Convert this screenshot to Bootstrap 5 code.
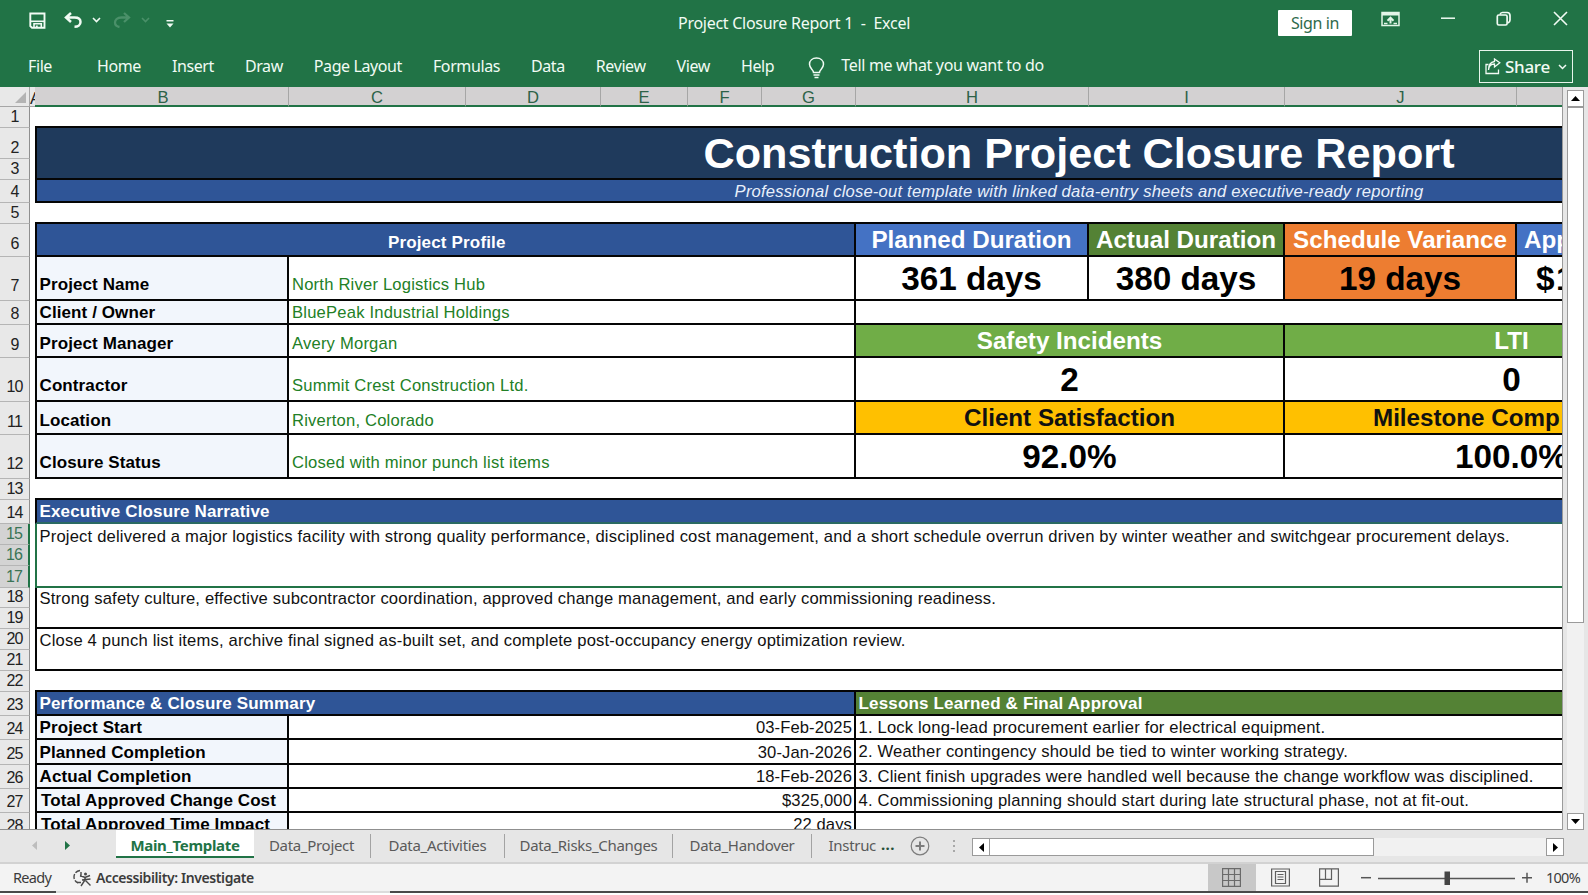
<!DOCTYPE html>
<html lang="en">
<head>
    <meta charset="utf-8">
    <title>Project Closure Report 1 - Excel</title>
    <link rel="stylesheet" href="https://cdn.jsdelivr.net/npm/bootstrap@5.3.0/dist/css/bootstrap.min.css">
    <style>
        body { font-family: "Noto Sans", "Open Sans", sans-serif; height: 895px; overflow: hidden; background: #fff; }
        svg { display: block; flex: none; }

        /* title bar + ribbon */
        .app-top { background: #217346; color: #f1fbf4; height: 87px; }
        .title-bar { height: 46px; }
        .title-side { width: 560px; }
        .doc-title { font-size: 16px; letter-spacing: -.27px; line-height: 22px; white-space: pre; }
        .quick-access { padding-left: 29px; padding-top: 12px; }
        .redo-icon { margin-left: 12px; }
        .customize-icon { margin: 8px 0 0 16px; }
        .win-buttons { padding-right: 20px; }
        .sign-in { width: 74px; height: 26px; margin-top: 10px; background: #fff; color: #2e6a4b; border-radius: 1px; font-size: 16px; line-height: 26px; letter-spacing: -.4px; }
        .ribbon-icon { margin: 11px 0 0 29px; }
        .win-icon { margin: 11px 0 0 41px; }
        .ribbon { height: 41px; padding-left: 28px; }
        .ribbon .nav { padding-top: 8px; }
        .ribbon .nav-link { color: inherit; padding: 0; margin-right: 31px; font-size: 16px; line-height: 24px; letter-spacing: -.4px; white-space: nowrap; }
        .ribbon .nav-link.file-tab { margin-right: 45px; }
        .tell-me { font-size: 16px; letter-spacing: -.32px; line-height: 22px; padding-top: 8px; }
        .bulb-icon { margin: 3px 16px 0 3px; }
        .share-btn { width: 94px; height: 33px; margin: 4px 15px 0 auto; border: 1.5px solid #e8f5ec; font-size: 17px; font-weight: 500; letter-spacing: -.3px; padding-left: 5px; }

        /* worksheet */
        .work-area { height: 743px; background: #e6e6e6; }
        .sheet-view { width: 1563px; overflow: hidden; background: #fff; border-bottom: 1px solid #8f8f8f; }
        .sheet { table-layout: fixed; width: 2123px; border-collapse: separate; border-spacing: 0; font: 16.6px/19px "Liberation Sans", Arial, sans-serif; color: #111; }
        .w-num { width: 30px; } .w-a { width: 5px; } .w-b { width: 254px; } .w-c { width: 177px; } .w-d { width: 135px; } .w-e { width: 87px; }
        .w-f { width: 74px; } .w-g { width: 94px; } .w-h { width: 233px; } .w-i { width: 196px; } .w-j { width: 232px; } .w-k { width: 223px; } .w-l { width: 383px; }
        .sheet td, .sheet th { padding: 0; white-space: nowrap; overflow: hidden; vertical-align: bottom; }
        .sheet thead th { height: 20px; background: #d3d1d2; color: #2d6248; font-weight: 400; text-align: center; line-height: 15px; padding-top: 3px; border-right: 1px solid #a6a6a6; border-bottom: 2px solid #217346; }
        .sheet thead th.corner { background: #e8e8e8; border-bottom: 1px solid #a6a6a6; }
        .sheet thead th.col-a { background: #e8e8e8; color: #222; border-right: 0; border-bottom: 1px solid #a6a6a6; text-align: left; }
        .sheet thead th.col-b { padding-left: 3px; }
        .corner svg { margin: 0 3px 3px auto; }
        .sheet tbody th { background: #e8e8e8; color: #222; font-weight: 400; font-size: 16px; line-height: 18px; letter-spacing: -.8px; text-align: center; border-right: 1px solid #8f8f8f; border-bottom: 1px solid #b5b5b5; padding-bottom: 1px; }
        .sheet tbody th.picked { background: #d3d3d3; color: #3a7456; border-right: 2px solid #217346; }
        .h20 { height: 20px; } .h21 { height: 21px; } .h22 { height: 22px; } .h23 { height: 23px; }
        .h24 { height: 24px; } .h25 { height: 25px; } .h31 { height: 31px; } .h33 { height: 33px; } .h44 { height: 44px; }

        .sheet td.bx { border-right: 2px solid #050505; border-bottom: 2px solid #050505; }
        .sheet td.line { border-bottom: 2px solid #050505; }
        .sheet td.lft { border-left: 2px solid #050505; }
        .sheet td.lbl { background: #f2f6fc; font-weight: 700; font-size: 17px; padding: 0 0 1px 2.5px; color: #000; letter-spacing: .1px; }
        .sheet td.lbl.in { padding-left: 4px; }
        .sheet td.val { color: #228026; padding: 0 0 1px 3px; letter-spacing: .2px; }
        .sheet td.num { text-align: right; padding: 0 2px 1px 0; letter-spacing: .1px; }
        .sheet td.mid { text-align: center; }
        .sheet td.hd { color: #fff; font-weight: 700; font-size: 17px; padding: 0 0 1px 2.5px; letter-spacing: .16px; }
        .sheet td.banner { background: #1f3a5c; color: #fff; font-weight: 700; font-size: 43.2px; line-height: 46px; vertical-align: middle; text-align: center; }
        .sheet td.sub { background: #2f5597; color: #e9f0fb; font-style: italic; text-align: center; letter-spacing: .2px; }
        .sheet td.kpi { font-weight: 700; font-size: 24.2px; line-height: 28px; text-align: center; vertical-align: middle; padding: 1px 0 0; color: #fff; }
        .sheet td.big { font-weight: 700; font-size: 33.3px; line-height: 38px; text-align: center; vertical-align: middle; padding: 2px 0 0; color: #000; }
        .sheet td.note { vertical-align: top; padding: 2px 0 0 2.5px; letter-spacing: .175px; }
        .sheet td.note.up { padding-top: 1px; }
        .sheet td.note.down { padding-top: 3px; }
        .sheet td.dark { color: #111; }
        .sheet td.cost-head { text-align: left; padding-left: 7px; }
        .sheet td.cost { text-align: left; padding-left: 19px; letter-spacing: 1.5px; }
        .sheet td.milestone { text-align: left; padding-left: 88px; }
        .sheet .h33 > th, .sheet .h33 > .lbl, .sheet .h33 > .val, .sheet .h33 > .hd { padding-bottom: 3px; }
        .sheet .h44 > th, .sheet .h44 > .lbl, .sheet .h44 > .val { padding-bottom: 5px; }
        .navy { background: #2f5597; } .blue { background: #4472c4; } .green { background: #548235; }
        .orange { background: #ed7d31; } .lime { background: #70ad47; } .gold { background: #ffc000; }
        .sheet td.sel { border-color: #217346; }
        .sheet td.sel-top { border-bottom-color: #2a6a63; }

        /* scrollbars */
        .v-scroll { width: 17px; margin: 3px 4px 0 4px; background: #f1f1f1; }
        .sheet-edge { border-left: 1px solid #9b9b9b; }
        .sb-btn { width: 17px; height: 17px; background: #fff; border: 1px solid #9a9a9a; flex: none; }
        .v-thumb { height: 516px; background: #fff; border: 1px solid #9a9a9a; }
        .h-scroll { width: 592px; height: 18px; background: #f1f1f1; margin-left: 16px; }
        .h-scroll .sb-btn { height: 18px; width: 18px; }
        .h-thumb { width: 384px; background: #fff; border: 1px solid #9a9a9a; border-left: 0; }

        /* sheet tabs + status bar */
        .tabs-row { height: 34px; background: #e6e6e6; border-bottom: 2px solid #d2d2d2; }
        .tabs-nav { width: 116px; height: 32px; padding: 11px 0 0 32px; gap: 28px; }
        .sheet-tab { height: 24px; margin-top: 4px; line-height: 23px; font-size: 15px; letter-spacing: -.3px; color: #5a5a5a; border-right: 1px solid #a3a3a3; text-align: center; white-space: nowrap; }
        .sheet-tab.current { margin-top: 0; height: 28px; line-height: 31px; background: #fff; color: #217346; font-weight: 700; border: 0; border-bottom: 2px solid #217346; letter-spacing: -.3px; width: 138px; }
        .t-project { width: 117px; padding-right: 1px; } .t-activities { width: 134px; } .t-risks { width: 168px; }
        .t-handover { width: 139px; } .t-instr { width: 61px; padding-left: 16.5px; text-align: left; border: 0; }
        .more-tabs { font-weight: 700; font-size: 15px; letter-spacing: .4px; line-height: 28px; color: #27503a; padding-left: 8px; width: 37px; }
        .add-tab { margin-top: 6px; }
        .grip { margin: 10px 0 0 22px; }
        .status-bar { height: 27px; background: #f3f3f3; color: #3b3b3b; font-size: 14.5px; }
        .ready { padding-left: 13px; width: 73px; letter-spacing: -.7px; }
        .access { font-size: 14px; font-weight: 600; letter-spacing: -.4px; }
        .view-btn { width: 48.5px; height: 27px; }
        .view-btn.on { background: #c8c8c8; }
        .zoom-bar { gap: 7px; padding-left: 8px; }
        .zoom-pct { width: 42px; margin-left: 7px; letter-spacing: -.75px; }
        .bottom-edge { height: 2px; background: #4a4a4a; }
        .bottom-edge span { width: 334px; margin-left: 56px; background: #dcdcdc; }
    </style>
</head>
<body>
<div class="d-flex flex-column">

    <header class="app-top">
        <div class="title-bar d-flex justify-content-between">
            <div class="title-side quick-access d-flex align-items-start">
                <!-- save -->
                <svg width="17" height="17" viewBox="0 0 17 17" fill="none" stroke="#f1fbf4" stroke-width="1.9"><path d="M1.3 1.500h14.200v14.300H3L1.300 14.200z"/><path d="M1.500 9.300h14" stroke-width="1.600"/><path d="M5 16v-4.200h7.300V16" stroke-width="1.600"/><path d="M7.800 13.500V16"/></svg>
                <!-- undo -->
                <svg class="ms-3" width="22" height="17" viewBox="0 0 22 17" fill="none" stroke="#f1fbf4" stroke-width="2.5"><path d="M9 1 4 5.500 9 10M4.500 5.500h8c4.500 0 6 2.300 6 4.500 0 2.800-2.500 4.800-6 4.800"/></svg>
                <svg class="mt-1 ms-2" width="9" height="8" viewBox="0 0 9 8" fill="none" stroke="#f1fbf4" stroke-width="1.600"><path d="m1 2 3.500 3.500L8 2"/></svg>
                <!-- redo, disabled -->
                <svg class="redo-icon" width="20" height="17" viewBox="0 0 20 17" fill="none" stroke="#4a9069" stroke-width="2.300"><path d="m11 1 5 4.500-5 4.500M16 5.500H8.500C4 5.500 2 8 2 10.500c0 2.500 2 4 4.500 4.500"/></svg>
                <svg class="mt-1 ms-2" width="9" height="8" viewBox="0 0 9 8" fill="none" stroke="#4a9069" stroke-width="1.600"><path d="m1 2 3.500 3.500L8 2"/></svg>
                <svg class="customize-icon" width="8" height="8" viewBox="0 0 8 8" fill="#f1fbf4"><path d="M.5 0h7v1.500h-7zM.5 3.500h7L4 7.500z"/></svg>
            </div>
            <div class="doc-title pt-2 mt-1">Project Closure Report 1  -  Excel</div>
            <div class="title-side win-buttons d-flex justify-content-end">
                <div class="sign-in text-center">Sign in</div>
                <svg class="ribbon-icon" width="19" height="16" viewBox="0 0 19 16" fill="none" stroke="#e3f6e8" stroke-width="1.500"><path d="M1 1.500h17v13H1z"/><path d="M1 3h17" stroke-width="3"/><path d="M9.500 12.500V7.500M6.500 9.700l3-3 3 3" stroke-width="2"/><path d="M3 12.500h3.500M12.500 12.500H16"/></svg>
                <svg class="win-icon" width="14" height="14" viewBox="0 0 14 14" stroke="#f1fbf4" stroke-width="1.500"><path d="M0 7.200h14"/></svg>
                <svg class="win-icon" width="16" height="16" viewBox="0 0 16 16" fill="none" stroke="#f1fbf4" stroke-width="1.700"><rect x="1.300" y="4" width="9.800" height="10" rx="1.500"/><path d="M4 3.500C4.500 2 5.500 1.500 6.500 1.500h4.500c2 0 3 1 3 3v4.500c0 1.500-.7 2.500-2 3"/></svg>
                <svg class="win-icon" width="15" height="15" viewBox="0 0 15 15" stroke="#f1fbf4" stroke-width="1.600"><path d="m1 1 13 13M14 1 1 14"/></svg>
            </div>
        </div>

        <nav class="ribbon d-flex align-items-start">
            <div class="nav flex-nowrap">
                <a class="nav-link file-tab">File</a>
                <a class="nav-link">Home</a>
                <a class="nav-link">Insert</a>
                <a class="nav-link">Draw</a>
                <a class="nav-link">Page Layout</a>
                <a class="nav-link">Formulas</a>
                <a class="nav-link">Data</a>
                <a class="nav-link">Review</a>
                <a class="nav-link">View</a>
                <a class="nav-link">Help</a>
            </div>
            <div class="tell-me d-flex">
                <svg class="bulb-icon" width="17" height="22" viewBox="0 0 17 22" fill="none" stroke="#f1fbf4" stroke-width="1.500"><path d="M5.500 15.500c0-3-4-4-4-8.200C1.500 3.500 4.500 1 8.500 1s7 2.500 7 6.300c0 4.200-4 5.200-4 8.200z"/><path d="M5.500 18h6M6.500 20.500h4"/></svg>
                <span>Tell me what you want to do</span>
            </div>
            <div class="share-btn d-flex align-items-center">
                <svg width="16" height="17" viewBox="0 0 16 17" fill="none" stroke="#f1fbf4" stroke-width="1.300"><path d="M3.500 6.500H1v9h12.500v-4"/><path d="M3.500 12c.3-4 2.500-6 6-6V9l5.300-4.300L9.500 1v2.500C6 4 3.500 7 3.500 12z"/></svg>
                <span class="ms-1">Share</span>
                <svg class="ms-2" width="9" height="8" viewBox="0 0 9 8" fill="none" stroke="#f1fbf4" stroke-width="1.500"><path d="m1 2 3.500 3.500L8 2"/></svg>
            </div>
        </nav>
    </header>

    <main class="work-area d-flex">
        <div class="sheet-view">
            <table class="sheet">
                <colgroup>
                    <col class="w-num"><col class="w-a"><col class="w-b"><col class="w-c"><col class="w-d"><col class="w-e"><col class="w-f">
                    <col class="w-g"><col class="w-h"><col class="w-i"><col class="w-j"><col class="w-k"><col class="w-l">
                </colgroup>
                <thead>
                    <tr>
                        <th class="corner"><svg width="11" height="11" viewBox="0 0 11 11" fill="#b3b3b3"><path d="M11 0v11H0z"/></svg></th>
                        <th class="col-a">A</th><th class="col-b">B</th><th>C</th><th>D</th><th>E</th><th>F</th><th>G</th><th>H</th><th>I</th><th>J</th><th></th><th></th>
                    </tr>
                </thead>
                <tbody>
                    <tr class="h21"><th>1</th><td></td><td class="line" colspan="11"></td></tr>
                    <tr class="h31"><th>2</th><td></td><td class="bx lft banner" colspan="11" rowspan="2">Construction Project Closure Report</td></tr>
                    <tr class="h21"><th>3</th><td></td></tr>
                    <tr class="h23"><th>4</th><td></td><td class="bx lft sub" colspan="11">Professional close-out template with linked data-entry sheets and executive-ready reporting</td></tr>
                    <tr class="h21"><th>5</th><td></td><td class="line" colspan="11"></td></tr>
                    <tr class="h33"><th>6</th><td></td><td class="bx lft hd navy mid" colspan="6">Project Profile</td><td class="bx kpi blue">Planned Duration</td><td class="bx kpi green">Actual Duration</td><td class="bx kpi orange">Schedule Variance</td><td class="bx kpi blue cost-head" colspan="2">App</td></tr>
                    <tr class="h44"><th>7</th><td></td><td class="bx lft lbl">Project Name</td><td class="bx val" colspan="5">North River Logistics Hub</td><td class="bx big">361 days</td><td class="bx big">380 days</td><td class="bx big orange">19 days</td><td class="bx big cost" colspan="2">$1</td></tr>
                    <tr class="h24"><th>8</th><td></td><td class="bx lft lbl">Client / Owner</td><td class="bx val" colspan="5">BluePeak Industrial Holdings</td><td class="bx" colspan="5"></td></tr>
                    <tr class="h33"><th>9</th><td></td><td class="bx lft lbl">Project Manager</td><td class="bx val" colspan="5">Avery Morgan</td><td class="bx kpi lime" colspan="2">Safety Incidents</td><td class="bx kpi lime" colspan="2">LTI</td><td class="bx lime"></td></tr>
                    <tr class="h44"><th>10</th><td></td><td class="bx lft lbl">Contractor</td><td class="bx val" colspan="5">Summit Crest Construction Ltd.</td><td class="bx big" colspan="2">2</td><td class="bx big" colspan="2">0</td><td class="bx"></td></tr>
                    <tr class="h33"><th>11</th><td></td><td class="bx lft lbl">Location</td><td class="bx val" colspan="5">Riverton, Colorado</td><td class="bx kpi gold dark" colspan="2">Client Satisfaction</td><td class="bx kpi gold dark milestone" colspan="2">Milestone Comp</td><td class="bx gold"></td></tr>
                    <tr class="h44"><th>12</th><td></td><td class="bx lft lbl">Closure Status</td><td class="bx val" colspan="5">Closed with minor punch list items</td><td class="bx big" colspan="2">92.0%</td><td class="bx big" colspan="2">100.0%</td><td class="bx"></td></tr>
                    <tr class="h21"><th>13</th><td></td><td class="line" colspan="11"></td></tr>
                    <tr class="h24"><th>14</th><td></td><td class="bx lft hd navy sel-top" colspan="11">Executive Closure Narrative</td></tr>
                    <tr class="h21"><th class="picked">15</th><td></td><td class="bx lft note down sel" colspan="11" rowspan="3">Project delivered a major logistics facility with strong quality performance, disciplined cost management, and a short schedule overrun driven by winter weather and switchgear procurement delays.</td></tr>
                    <tr class="h21"><th class="picked">16</th><td></td></tr>
                    <tr class="h22"><th class="picked">17</th><td></td></tr>
                    <tr class="h20"><th>18</th><td></td><td class="bx lft note up" colspan="11" rowspan="2">Strong safety culture, effective subcontractor coordination, approved change management, and early commissioning readiness.</td></tr>
                    <tr class="h21"><th>19</th><td></td></tr>
                    <tr class="h21"><th>20</th><td></td><td class="bx lft note" colspan="11" rowspan="2">Close 4 punch list items, archive final signed as-built set, and complete post-occupancy energy optimization review.</td></tr>
                    <tr class="h21"><th>21</th><td></td></tr>
                    <tr class="h21"><th>22</th><td></td><td class="line" colspan="11"></td></tr>
                    <tr class="h24"><th>23</th><td></td><td class="bx lft hd navy" colspan="6">Performance &amp; Closure Summary</td><td class="bx hd green" colspan="5">Lessons Learned &amp; Final Approval</td></tr>
                    <tr class="h24"><th>24</th><td></td><td class="bx lft lbl">Project Start</td><td class="bx num" colspan="5">03-Feb-2025</td><td class="bx note" colspan="5">1. Lock long-lead procurement earlier for electrical equipment.</td></tr>
                    <tr class="h25"><th>25</th><td></td><td class="bx lft lbl">Planned Completion</td><td class="bx num" colspan="5">30-Jan-2026</td><td class="bx note" colspan="5">2. Weather contingency should be tied to winter working strategy.</td></tr>
                    <tr class="h24"><th>26</th><td></td><td class="bx lft lbl">Actual Completion</td><td class="bx num" colspan="5">18-Feb-2026</td><td class="bx note" colspan="5">3. Client finish upgrades were handled well because the change workflow was disciplined.</td></tr>
                    <tr class="h24"><th>27</th><td></td><td class="bx lft lbl in">Total Approved Change Cost</td><td class="bx num" colspan="5">$325,000</td><td class="bx note" colspan="5">4. Commissioning planning should start during late structural phase, not at fit-out.</td></tr>
                    <tr class="h24"><th>28</th><td></td><td class="bx lft lbl in">Total Approved Time Impact</td><td class="bx num" colspan="5">22 days</td><td class="bx" colspan="5"></td></tr>
                </tbody>
            </table>
        </div>
        <div class="sheet-edge"></div>
        <div class="v-scroll d-flex flex-column">
            <div class="sb-btn d-flex align-items-center justify-content-center"><svg width="9" height="5" viewBox="0 0 9 5"><path d="M4.500 0 9 5H0z"/></svg></div>
            <div class="v-thumb"></div>
            <div class="sb-btn d-flex align-items-center justify-content-center mt-auto"><svg width="9" height="5" viewBox="0 0 9 5"><path d="M0 0h9L4.500 5z"/></svg></div>
        </div>
    </main>

    <div class="tabs-row d-flex align-items-start">
        <div class="tabs-nav d-flex">
            <svg width="5" height="9" viewBox="0 0 5 9" fill="#bdbdbd"><path d="M5 0v9L0 4.500z"/></svg>
            <svg width="5" height="9" viewBox="0 0 5 9" fill="#217346"><path d="M0 0v9l5-4.500z"/></svg>
        </div>
        <div class="sheet-tab current">Main_Template</div>
        <div class="sheet-tab t-project">Data_Project</div>
        <div class="sheet-tab t-activities">Data_Activities</div>
        <div class="sheet-tab t-risks">Data_Risks_Changes</div>
        <div class="sheet-tab t-handover">Data_Handover</div>
        <div class="sheet-tab t-instr">Instruc</div>
        <div class="more-tabs">...</div>
        <svg class="add-tab" width="20" height="20" viewBox="0 0 20 20" fill="none" stroke="#7d7d7d"><circle cx="10" cy="10" r="8.800" stroke-width="1.200"/><path d="M10 5.500v9M5.500 10h9" stroke-width="2"/></svg>
        <svg class="grip" width="4" height="13" viewBox="0 0 4 13" fill="#a8a8a8"><path d="M1 0h2v2H1zM1 5h2v2H1zM1 10h2v2H1z"/></svg>
        <div class="h-scroll d-flex mt-2">
            <div class="sb-btn d-flex align-items-center justify-content-center"><svg width="5" height="9" viewBox="0 0 5 9"><path d="M5 0v9L0 4.500z"/></svg></div>
            <div class="h-thumb"></div>
            <div class="sb-btn d-flex align-items-center justify-content-center ms-auto"><svg width="5" height="9" viewBox="0 0 5 9"><path d="M0 0v9l5-4.500z"/></svg></div>
        </div>
    </div>

    <footer class="status-bar d-flex align-items-center">
        <div class="ready">Ready</div>
        <svg width="19" height="18" viewBox="0 0 19 18" fill="none" stroke="#4a4a4a" stroke-width="1.400"><path d="M7 1.500C3 2 1 4.800 1 8c0 2.500 1.500 4.800 4 5.800" stroke-dasharray="5 1.500"/><path d="M4 13.500h4M8 3v5M7 6.500l5 2 5-2M12 8.500v2.500l-4 6M12 11l5.500 5.500M9 11l8.500-1"/><circle cx="12.500" cy="5" r="1.500" fill="#4a4a4a" stroke="none"/></svg>
        <div class="access ms-1">Accessibility: Investigate</div>
        <div class="d-flex align-items-center ms-auto">
            <div class="view-btn on d-flex align-items-center justify-content-center"><svg width="19" height="19" viewBox="0 0 19 19" fill="none" stroke="#6a6a6a" stroke-width="1.200"><path d="M.6.6h17.800v17.800H.6zM.6 6.500h17.800M.6 12.500h17.800M6.500.6v17.800M12.500.6v17.800"/></svg></div>
            <div class="view-btn d-flex align-items-center justify-content-center"><svg width="19" height="19" viewBox="0 0 19 19" fill="none" stroke="#5f5f5f" stroke-width="1.200"><path d="M.6 1h17.800v17H.6z"/><path d="M4.500 3.500h10v12h-10zM6.500 6.500h6M6.500 9h6M6.500 11.500h6"/></svg></div>
            <div class="view-btn d-flex align-items-center justify-content-center"><svg width="20" height="19" viewBox="0 0 20 19" fill="none" stroke="#5f5f5f" stroke-width="1.200"><path d="M.6.800h18.800v17.400H.6zM6.500.8v10.500M12.500.8v10.500H.6"/></svg></div>
            <div class="zoom-bar d-flex align-items-center">
                <svg width="10" height="14" viewBox="0 0 10 14" stroke="#555" stroke-width="1.500"><path d="M0 6.700h10"/></svg>
                <svg width="137" height="16" viewBox="0 0 137 16"><path d="M0 8.500h137" stroke="#555" stroke-width="1.300"/><path d="M66.500 1.500h5.500v13.500h-5.500z" fill="#444"/></svg>
                <svg width="10" height="14" viewBox="0 0 10 14" stroke="#555" stroke-width="1.500"><path d="M0 6.700h10M5 1.700v10"/></svg>
                <div class="zoom-pct">100%</div>
            </div>
        </div>
    </footer>
    <div class="bottom-edge d-flex"><span></span></div>
</div>
<script src="https://cdn.jsdelivr.net/npm/bootstrap@5.3.0/dist/js/bootstrap.bundle.min.js"></script>
</body>
</html>
